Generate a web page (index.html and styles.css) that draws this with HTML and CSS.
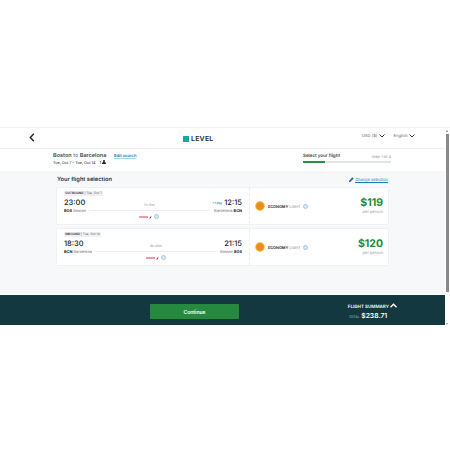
FILE: index.html
```html
<!DOCTYPE html>
<html>
<head>
  <title>LEVEL - Select your flight</title>
  <link rel="stylesheet" href="styles.css">
</head>
<body>
  <div class="window">
    <div class="page">
      <header class="topbar">
        <svg class="back" width="6" height="9" viewBox="0 0 6 9"><path d="M4.800 .8 1.300 4.500l3.500 3.700" fill="none" stroke="#222" stroke-width="1.400"/></svg>
        <div class="logo"><span class="logo-mark"></span>LEVEL</div>
        <div class="top-menu">
          <span>USD ($) <svg class="caret" width="6" height="4" viewBox="0 0 6 4"><path d="M.5 .5 3 3 5.500 .5" fill="none" stroke="#333" stroke-width="1"/></svg></span>
          <span>English <svg class="caret" width="6" height="4" viewBox="0 0 6 4"><path d="M.5 .5 3 3 5.500 .5" fill="none" stroke="#333" stroke-width="1"/></svg></span>
        </div>
      </header>

      <section class="trip">
        <div class="trip-info">
          <div class="trip-route"><b>Boston</b> to <b>Barcelona</b> <a class="edit">Edit search</a></div>
          <div class="trip-dates">Tue, Oct 7 - Tue, Oct 14 <span class="pax">1 <svg width="4" height="4" viewBox="0 0 4 4"><circle cx="2" cy="1" r="1" fill="#222"/><path d="M0 4c0-1.600 .8-2 2-2s2 .4 2 2z" fill="#222"/></svg></span></div>
        </div>
        <div class="steps">
          <div class="steps-text"><b>Select your flight</b><span>Step 1 of 4</span></div>
          <div class="steps-track"><div class="steps-fill"></div></div>
        </div>
      </section>

      <main class="content">
        <div class="content-head">
          <h2>Your flight selection</h2>
          <a class="change"><svg width="5" height="5" viewBox="0 0 5 5"><path d="M0 5V3.800L3.500 .3 4.700 1.500 1.200 5z" fill="#1b6f9a"/></svg>Change selection</a>
        </div>

        <article class="card">
          <div class="leg">
            <div class="tag"><b>OUTBOUND</b> | Tue, Oct 7</div>
            <div class="leg-body">
              <div class="stop">
                <div class="time">23:00</div>
                <div class="airport"><b>BOS</b> Boston</div>
              </div>
              <div class="path">
                <div class="duration">7h 15m</div>
                <div class="line"></div>
                <div class="carrier">
                  <svg width="13" height="4" viewBox="0 0 13 4"><path d="M0 1.500h9v1H0z" fill="#d9364a"/><path d="M10 3.500 12.500 .5 11.800 3.200z" fill="#c8102e"/></svg>
                  <span class="info"></span>
                </div>
              </div>
              <div class="stop stop-end">
                <div class="arrive"><span class="plus-day">+1 day</span><span class="time">12:15</span></div>
                <div class="airport">Barcelona <b>BCN</b></div>
              </div>
            </div>
          </div>
          <div class="fare">
            <span class="sun"></span>
            <div class="fare-name"><b>ECONOMY</b> LIGHT</div>
            <span class="info"></span>
            <div class="price"><strong>$119</strong><span>per person</span></div>
          </div>
        </article>

        <article class="card">
          <div class="leg">
            <div class="tag"><b>INBOUND</b> | Tue, Oct 14</div>
            <div class="leg-body">
              <div class="stop">
                <div class="time">18:30</div>
                <div class="airport"><b>BCN</b> Barcelona</div>
              </div>
              <div class="path">
                <div class="duration">8h 45m</div>
                <div class="line"></div>
                <div class="carrier">
                  <svg width="13" height="4" viewBox="0 0 13 4"><path d="M0 1.500h9v1H0z" fill="#d9364a"/><path d="M10 3.500 12.500 .5 11.800 3.200z" fill="#c8102e"/></svg>
                  <span class="info"></span>
                </div>
              </div>
              <div class="stop stop-end">
                <div class="arrive"><span class="time">21:15</span></div>
                <div class="airport">Boston <b>BOS</b></div>
              </div>
            </div>
          </div>
          <div class="fare">
            <span class="sun"></span>
            <div class="fare-name"><b>ECONOMY</b> LIGHT</div>
            <span class="info"></span>
            <div class="price"><strong>$120</strong><span>per person</span></div>
          </div>
        </article>
      </main>

      <footer class="summary">
        <button class="continue">Continue</button>
        <div class="totals">
          <div class="totals-title">FLIGHT SUMMARY <svg width="7" height="5" viewBox="0 0 7 5"><path d="M.5 4.300 3.500 1.200l3 3.100" fill="none" stroke="#fff" stroke-width="1.300"/></svg></div>
          <div class="totals-amount"><span>TOTAL</span> $238.71</div>
        </div>
      </footer>
    </div>
    <div class="scrollbar"><div class="scroll-thumb"></div></div>
  </div>
</body>
</html>
```

FILE: styles.css
```css
body {
  margin: 0;
  height: 450px;
  overflow: hidden;
  background: #fff;
  font-family: Inter, "Noto Sans", sans-serif;
  color: #2b2b2b;
  text-rendering: geometricPrecision;
}

.window {
  display: flex;
  height: 197px;
  margin-top: 127px;
  border-top: 1px solid #fbeee8;
}

.page {
  width: 445px;
  display: flex;
  flex-direction: column;
}

/* top bar */
.topbar {
  height: 20px;
  display: flex;
  align-items: center;
  position: relative;
  border-bottom: 1px solid #f0f0f0;
}
.back {
  margin-left: 29px;
  margin-top: -2px;
}
.logo {
  position: absolute;
  left: 183px;
  top: 7px;
  display: flex;
  align-items: center;
  gap: 2px;
  font-size: 7px;
  line-height: 7px;
  font-weight: 600;
  letter-spacing: .2px;
  color: #1f2a2a;
}
.logo-mark {
  width: 6px;
  height: 6px;
  background: #17a79c;
}
.top-menu {
  margin-left: auto;
  margin-right: 30px;
  margin-top: -2px;
  display: flex;
  gap: 9px;
  font-size: 4.200px;
  color: #666;
}
.caret {
  vertical-align: middle;
}

/* trip strip */
.trip {
  height: 22px;
  display: flex;
  justify-content: space-between;
  align-items: flex-start;
  padding: 4px 54px 0 53px;
  box-sizing: border-box;
}
.trip-route {
  font-size: 5.500px;
  line-height: 7px;
  color: #666;
}
.trip-route b {
  font-weight: 600;
  color: #444;
}
.edit {
  margin-left: 6px;
  font-size: 4.200px;
  font-weight: 600;
  color: #1b7fb0;
  text-decoration: underline;
  text-decoration-color: #a8d4e8;
}
.trip-dates {
  font-size: 3.800px;
  line-height: 6px;
  font-weight: 500;
  color: #333;
}
.pax {
  margin-left: 3px;
  font-size: 4px;
}
.steps {
  width: 88px;
}
.steps-text {
  display: flex;
  justify-content: space-between;
  align-items: center;
  font-size: 4.500px;
  line-height: 7px;
  color: #999;
}
.steps-text b {
  font-weight: 600;
  color: #444;
}
.steps-text span {
  font-size: 3.900px;
}
.steps-track {
  height: 1.500px;
  margin-top: 1px;
  background: #e4e4e4;
}
.steps-fill {
  width: 22px;
  height: 1.500px;
  background: #1e9440;
}

/* flight cards */
.content {
  flex: 1;
  background: #f7f8fa;
  padding: 0 57px;
}
.content-head {
  height: 17px;
  display: flex;
  justify-content: space-between;
  align-items: center;
}
.content-head h2 {
  margin: 0;
  font-size: 5.700px;
  font-weight: 600;
  color: #26324a;
}
.change {
  display: flex;
  align-items: center;
  gap: 1px;
  font-size: 4px;
  color: #1b7fb0;
  text-decoration: underline;
}
.card {
  height: 36px;
  margin-bottom: 5px;
  display: flex;
  background: #fff;
  box-shadow: 0 0 1px rgba(0,0,0,.18);
}
.leg {
  width: 193px;
  padding: 3px 7px 0 7px;
  box-sizing: border-box;
  border-right: 1px dashed #ececec;
}
.tag {
  width: fit-content;
  padding: 0 1px;
  font-size: 3.200px;
  line-height: 5px;
  color: #555;
  background: #f0f0f6;
}
.tag b {
  font-weight: 700;
  color: #444;
}
.leg-body {
  display: flex;
  gap: 3px;
  margin-top: 2px;
}
.stop {
  flex: none;
}
.stop-end {
  text-align: right;
}
.time {
  font-size: 7.500px;
  font-weight: 500;
  color: #222;
  line-height: 10px;
}
.airport {
  font-size: 3.900px;
  line-height: 6px;
  color: #777;
}
.airport b {
  color: #222;
  font-weight: 700;
}
.arrive {
  display: flex;
  justify-content: flex-end;
  align-items: center;
  gap: 2px;
}
.plus-day {
  font-size: 3.200px;
  font-weight: 600;
  color: #1b7fb0;
}
.path {
  flex: 1;
  padding-top: 5px;
  text-align: center;
}
.duration {
  font-size: 3.200px;
  line-height: 5px;
  color: #888;
}
.line {
  height: 1px;
  margin-top: 2px;
  background: #eeeeee;
}
.carrier {
  display: flex;
  justify-content: center;
  align-items: center;
  gap: 2px;
  margin-top: 3px;
}
.info {
  width: 3px;
  height: 3px;
  flex: none;
  background: #d6e9f6;
  border: 1px solid #9cc9e6;
  border-radius: 50%;
}
.fare {
  flex: 1;
  display: flex;
  align-items: center;
  padding: 0 5px;
}
.sun {
  width: 10px;
  height: 10px;
  background: radial-gradient(circle closest-side, #ee8a22 68%, #f6c53c 88%, #fbe08a 100%);
  border-radius: 50%;
  margin-right: 3px;
}
.fare-name {
  font-size: 3.800px;
  color: #888;
  margin-right: 2px;
}
.fare-name b {
  font-weight: 700;
  color: #333;
}
.price {
  margin-left: auto;
  display: flex;
  flex-direction: column;
  align-items: flex-end;
}
.price strong {
  font-size: 10.500px;
  line-height: 12px;
  font-weight: 700;
  color: #1e8a3c;
}
.price span {
  font-size: 4px;
  line-height: 6px;
  color: #999;
}

/* footer */
.summary {
  height: 30px;
  margin-top: 1px;
  display: flex;
  align-items: center;
  background: #13383f;
}
.continue {
  width: 89px;
  height: 15px;
  margin-left: 150px;
  margin-top: 3px;
  border: none;
  border-radius: 1px;
  background: #258a3f;
  color: #fff;
  font-family: inherit;
  font-size: 5px;
  font-weight: 600;
}
.totals {
  margin-left: auto;
  margin-right: 48px;
  margin-top: 4px;
  color: #fff;
}
.totals-title {
  font-size: 4.500px;
  font-weight: 600;
  line-height: 6px;
  white-space: nowrap;
}
.totals-amount {
  font-size: 6.800px;
  font-weight: 600;
  line-height: 9px;
  padding-left: 1px;
}
.totals-amount span {
  font-size: 3.400px;
  font-weight: 400;
  color: #b5c4c6;
}

/* scrollbar */
.scrollbar {
  width: 5px;
  padding: 2px 0 0 1px;
  box-sizing: border-box;
  display: flex;
  flex-direction: column;
  background: #fff;
}
.scrollbar::before,
.scrollbar::after {
  content: "";
  width: 0;
  height: 0;
  border-left: 1.500px solid transparent;
  border-right: 1.500px solid transparent;
}
.scrollbar::before {
  border-bottom: 2px solid #777;
  margin-bottom: 2px;
}
.scrollbar::after {
  border-top: 2px solid #999;
  margin-top: auto;
}
.scroll-thumb {
  width: 3px;
  height: 158px;
  background: #8a8a8a;
}
```
